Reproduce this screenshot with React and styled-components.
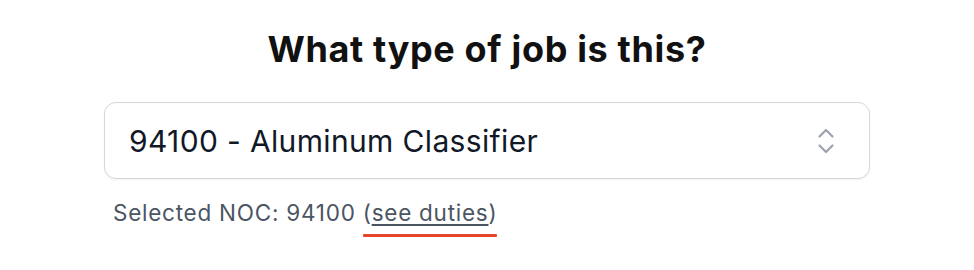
import React, { useState } from "react";
import styled, { createGlobalStyle } from "styled-components";

const GlobalStyle = createGlobalStyle`
  html, body {
    margin: 0;
    padding: 0;
    background: #ffffff;
  }
  body {
    font-family: Inter, "Noto Sans", "Liberation Sans", sans-serif;
  }
`;

const jobs = [
    { code: "94100", name: "Aluminum Classifier" },
    { code: "94101", name: "Foundry Worker" },
    { code: "94102", name: "Glass Process Operator" },
];

const Page = styled.div`
    width: 974px;
    height: 270px;
    display: flex;
    flex-direction: column;
    align-items: center;
    padding-top: 27px;
    box-sizing: border-box;
`;

const Title = styled.h1`
    margin: 0;
    font-size: 36px;
    line-height: 44px;
    font-weight: 700;
    color: #111111;
    letter-spacing: 0.65px;
`;

const Field = styled.div`
    width: 766px;
    margin-top: 31px;
`;

const SelectBox = styled.div`
    position: relative;
    height: 77px;
    box-sizing: border-box;
    border: 1.5px solid #d4d6db;
    border-radius: 12px;
    background: #ffffff;
    box-shadow: 0 1px 2px rgba(0, 0, 0, 0.05);
    display: flex;
    align-items: center;
    padding: 0 34px 0 24px;

    select {
        position: absolute;
        inset: 0;
        opacity: 0;
        cursor: pointer;
    }
`;

const SelectValue = styled.span`
    flex: 1;
    font-size: 30px;
    color: #111827;
    letter-spacing: 0.35px;
`;

const Chevrons = styled.svg`
    width: 18px;
    height: 30px;
    color: #9ca3af;
`;

const Helper = styled.p`
    margin: 20px 0 0 9px;
    font-size: 22.5px;
    color: #4b5563;
    letter-spacing: 0.75px;
`;

const Duties = styled.span`
    position: relative;

    &::after {
        content: "";
        position: absolute;
        left: 0;
        right: 0;
        bottom: -11px;
        height: 3px;
        background: #e8442c;
        border-radius: 1px;
    }

    a {
        color: inherit;
        text-decoration: underline;
        text-underline-offset: 3px;
        text-decoration-thickness: 1.5px;
    }
`;

const App = () => {
    const [selected, setSelected] = useState(jobs[0]);

    return (
        <>
            <GlobalStyle />
            <Page>
                <Title>What type of job is this?</Title>
                <Field>
                    <SelectBox>
                        <SelectValue>{selected.code} - {selected.name}</SelectValue>
                        <Chevrons viewBox="0 0 18 30" fill="none" stroke="currentColor" strokeWidth="2.2" strokeLinecap="round" strokeLinejoin="round">
                            <path d="M2.5 10.5 L9 4 L15.5 10.5" />
                            <path d="M2.5 19.5 L9 26 L15.5 19.5" />
                        </Chevrons>
                        <select
                            value={selected.code}
                            onChange={(e) => setSelected(jobs.find((j) => j.code === e.target.value))}
                        >
                            {jobs.map((j) => (
                                <option key={j.code} value={j.code}>{j.code} - {j.name}</option>
                            ))}
                        </select>
                    </SelectBox>
                    <Helper>
                        Selected NOC: {selected.code}{" "}
                        <Duties>(<a href="#duties">see duties</a>)</Duties>
                    </Helper>
                </Field>
            </Page>
        </>
    );
};

export default App;
